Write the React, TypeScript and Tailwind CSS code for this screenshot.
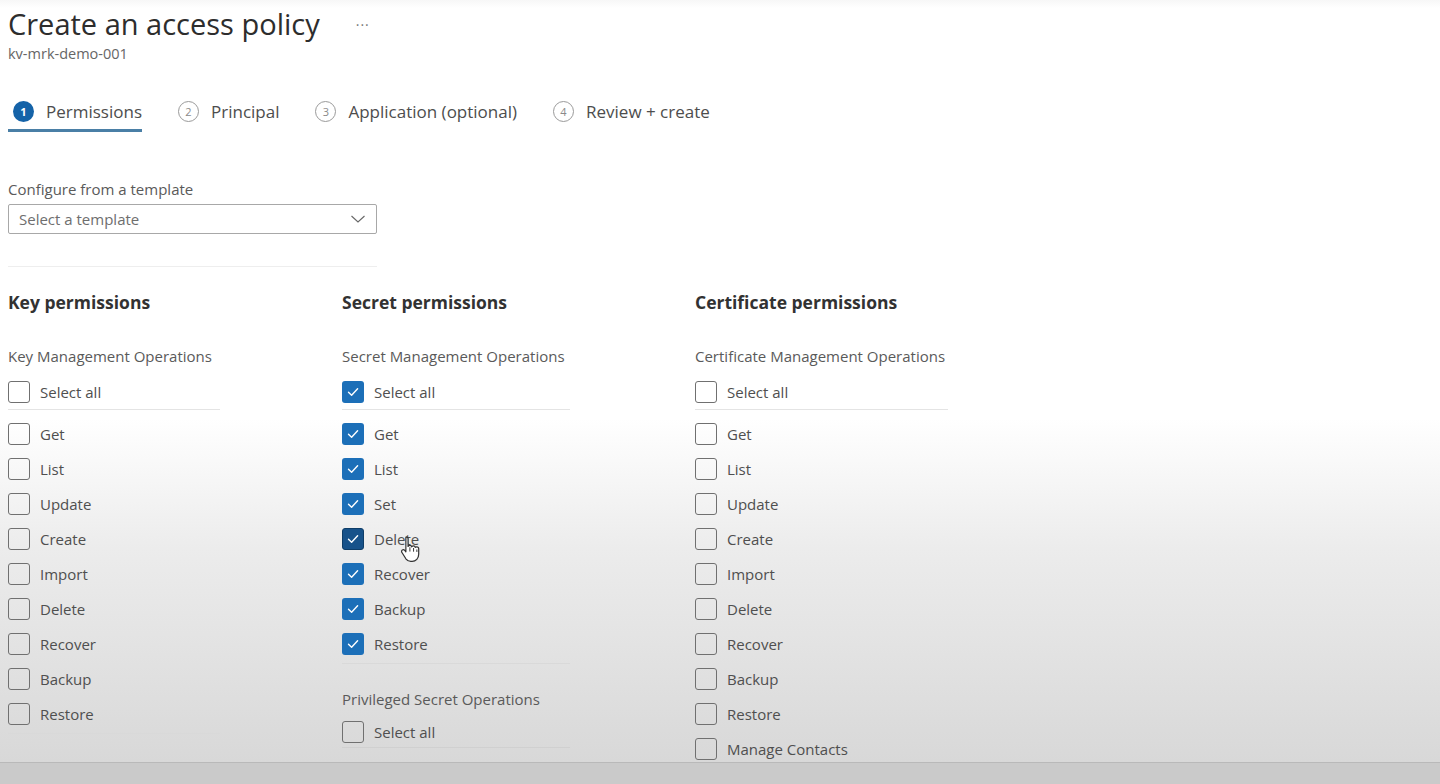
import React from 'react';

type Item = { label: string; checked?: boolean; hover?: boolean };

const keyItems: Item[] = ['Get', 'List', 'Update', 'Create', 'Import', 'Delete', 'Recover', 'Backup', 'Restore'].map((label) => ({ label }));
const secretItems: Item[] = ['Get', 'List', 'Set', 'Delete', 'Recover', 'Backup', 'Restore'].map((label) => ({
  label,
  checked: true,
  hover: label === 'Delete',
}));
const certItems: Item[] = ['Get', 'List', 'Update', 'Create', 'Import', 'Delete', 'Recover', 'Backup', 'Restore', 'Manage Contacts'].map(
  (label) => ({ label })
);

function Box({ checked, hover }: { checked?: boolean; hover?: boolean }) {
  if (checked) {
    return (
      <span
        className={`flex h-[22px] w-[22px] shrink-0 items-center justify-center rounded-[3px] ${
          hover ? 'bg-[#17528a] border border-[#0e3d68]' : 'bg-[#1c6fb8]'
        }`}
      >
        <svg width="14" height="14" viewBox="0 0 14 14" fill="none">
          <path d="M2.5 7.3 5.6 10.2 11.6 3.8" stroke="white" strokeWidth="1.4" strokeLinecap="round" strokeLinejoin="round" />
        </svg>
      </span>
    );
  }
  return <span className="h-[22px] w-[22px] shrink-0 rounded-[3px] border-[1.5px] border-[#707070]" />;
}

function Row({ item }: { item: Item }) {
  return (
    <div className="relative flex h-[35px] items-center gap-[10px]">
      <Box checked={item.checked} hover={item.hover} />
      <span className="text-[15px] text-[#4f4f4f]">{item.label}</span>
      {item.hover && (
        <svg className="absolute left-[58px] top-[13px]" width="22" height="27" viewBox="0 0 18 22">
          <path
            d="M5 1.5c1 0 1.6.7 1.6 1.6v6.2c.3-.6.9-.9 1.5-.9.8 0 1.4.5 1.5 1.2.3-.5.8-.8 1.4-.8.8 0 1.4.6 1.5 1.3.3-.3.7-.5 1.2-.5.9 0 1.6.7 1.6 1.6v4.6c0 3.2-2.3 5.7-5.4 5.7H8.8c-1.7 0-3-.8-4-2.1L1.6 14.3c-.5-.7-.4-1.6.3-2.1.7-.5 1.5-.3 2 .3l.9 1.2V3.1c0-.9.2-1.6.2-1.6Z"
            fill="white"
            stroke="#333"
            strokeWidth="1"
            strokeLinejoin="round"
          />
          <path d="M8.1 10v3.5M11.1 10.6v3M13.8 11.8v2" stroke="#333" strokeWidth="0.8" />
        </svg>
      )}
    </div>
  );
}

function Column({
  title,
  group,
  items,
  width,
  children,
}: {
  title: string;
  group: string;
  items: Item[];
  width: string;
  children?: React.ReactNode;
}) {
  const allChecked = items.every((i) => i.checked);
  return (
    <div className="flex flex-col">
      <h3 className="h-[26px] text-[17.5px] font-bold leading-[26px] text-[#323232]">{title}</h3>
      <p className="mt-[30px] text-[15px] text-[#5a5a5a]">{group}</p>
      <div className={`${width} mt-[10px]`}>
        <div className="flex h-[32px] items-center gap-[10px] border-b border-[#e4e4e4] pb-[2px]">
          <Box checked={allChecked} />
          <span className="text-[15px] text-[#4f4f4f]">Select all</span>
        </div>
        <div className="mt-[7px] border-b border-[#d9d9d9] pb-[1px]">
          {items.map((item) => (
            <Row key={item.label} item={item} />
          ))}
        </div>
      </div>
      {children}
    </div>
  );
}

function Step({ n, label, active }: { n: number; label: string; active?: boolean }) {
  return (
    <div className={`flex h-[40px] items-center gap-[12px] ${active ? 'border-b-[3px] border-[#4a7fa6] pt-[3px]' : ''}`}>
      <span
        className={`flex h-[21px] w-[21px] items-center justify-center rounded-full text-[11px] ${
          active ? 'bg-[#1563a8] font-bold text-white' : 'border border-[#9a9a9a] text-[#8a8a8a]'
        } ${active ? 'ml-[5px]' : ''}`}
      >
        {n}
      </span>
      <span className="text-[17px] text-[#4d4d4d]">{label}</span>
    </div>
  );
}

export default function App() {
  return (
    <div className="flex h-[784px] w-[1440px] flex-col overflow-hidden font-['Open_Sans',sans-serif]">
      <div className="h-[762px] shrink-0 overflow-hidden bg-[linear-gradient(to_bottom,#f7f7f7_0px,#ffffff_8px,#ffffff_55%,#ececec_72%,#d8d8d8_100%)] px-[8px]">
        <div className="flex items-center gap-[36px] pt-[4px]">
          <h1 className="text-[29px] leading-[40px] text-[#2d2d2d]">Create an access policy</h1>
          <span className="text-[14px] tracking-[1px] text-[#777]">···</span>
        </div>
        <p className="-mt-[1px] text-[14.5px] text-[#666]">kv-mrk-demo-001</p>

        <div className="mt-[27px] flex items-end gap-[36px]">
          <Step n={1} label="Permissions" active />
          <Step n={2} label="Principal" />
          <Step n={3} label="Application (optional)" />
          <Step n={4} label="Review + create" />
        </div>

        <div className="w-[369px]">
          <p className="mt-[46px] text-[15px] text-[#5a5a5a]">Configure from a template</p>
          <div className="mt-[4px] flex h-[30px] items-center justify-between rounded-[2px] border border-[#a8a8a8] bg-white px-[10px]">
            <span className="text-[15px] text-[#6e6e6e]">Select a template</span>
            <svg width="16" height="10" viewBox="0 0 16 10" fill="none">
              <path d="M1.5 2 8 8 14.5 2" stroke="#666" strokeWidth="1.1" />
            </svg>
          </div>
          <div className="mt-[32px] border-b border-[#eeeeee]" />
        </div>

        <div className="mt-[22px] flex">
          <div className="w-[334px]">
            <Column title="Key permissions" group="Key Management Operations" items={keyItems} width="w-[212px]" />
          </div>
          <div className="w-[353px]">
            <Column title="Secret permissions" group="Secret Management Operations" items={secretItems} width="w-[228px]">
              <p className="mt-[24px] text-[15px] text-[#5a5a5a]">Privileged Secret Operations</p>
              <div className="mt-[6px] flex h-[32px] w-[228px] items-center gap-[10px] border-b border-[#d0d0d0]">
                <Box />
                <span className="text-[15px] text-[#4f4f4f]">Select all</span>
              </div>
            </Column>
          </div>
          <div>
            <Column title="Certificate permissions" group="Certificate Management Operations" items={certItems} width="w-[253px]" />
          </div>
        </div>
      </div>
      <div className="flex-1 border-t border-[#b9b9b9] bg-[#cacaca]" />
    </div>
  );
}
